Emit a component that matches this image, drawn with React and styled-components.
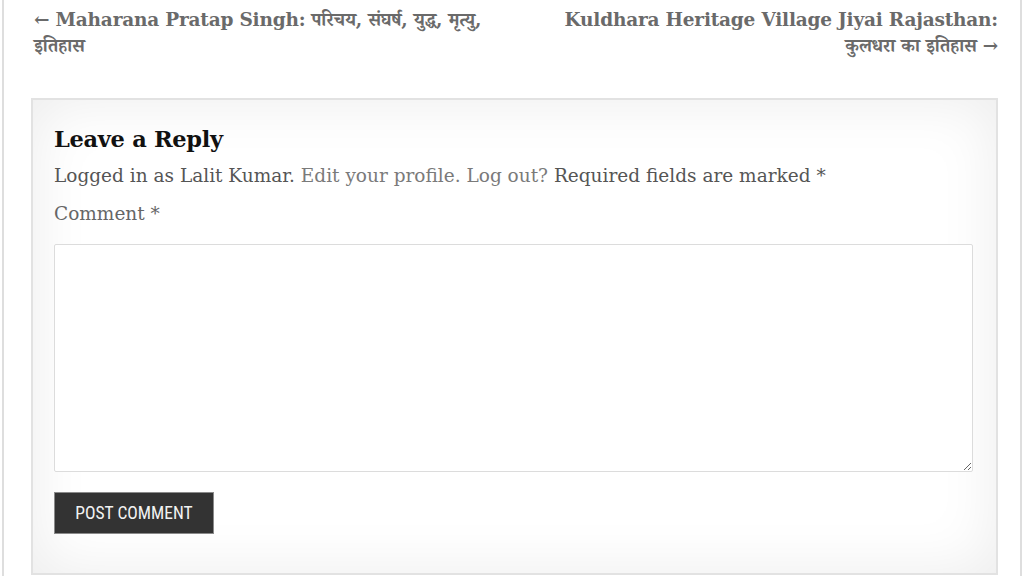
import React from "react";
import styled, { createGlobalStyle } from "styled-components";

const Global = createGlobalStyle`
  html, body { margin: 0; padding: 0; background: #fff; }
  body { font-family: "DejaVu Serif", "Noto Serif Devanagari", "Noto Sans Devanagari", "Lohit Devanagari", "FreeSerif", serif; }
  * { box-sizing: border-box; }
`;

const Page = styled.div`
  width: 1024px;
  height: 576px;
  overflow: hidden;
  padding: 0 2px;
`;

const Frame = styled.div`
  height: 100%;
  border-left: 2px solid #dedede;
  border-right: 2px solid #dedede;
  padding: 0 22px 1px 27px;
  display: flex;
  flex-direction: column;
`;

const PostNav = styled.nav`
  display: flex;
  justify-content: space-between;
  padding: 7px 0 0 3px;
  height: 98px;
`;

const NavLink = styled.a`
  flex: 0 0 480px;
  font-size: 18.5px;
  line-height: 26px;
  font-weight: bold;
  color: #6a6a6a;
  text-decoration: none;
  text-align: ${(p) => (p.$right ? "right" : "left")};
  letter-spacing: -0.2px;
`;

const ReplyBox = styled.section`
  flex: 1;
  border: 2px solid #e2e2e2;
  background: #fff;
  box-shadow: inset 0 0 60px rgba(0, 0, 0, 0.08);
  padding: 24px 22px 0 21px;
  display: flex;
  flex-direction: column;
`;

const Title = styled.h3`
  margin: 0;
  font-size: 22.5px;
  line-height: 30px;
  font-weight: bold;
  color: #111;
  letter-spacing: -0.3px;
`;

const Meta = styled.p`
  margin: 9px 0 0;
  font-size: 18.5px;
  line-height: 26px;
  color: #555;
`;

const MetaLink = styled.a`
  color: #7a7a7a;
  text-decoration: none;
`;

const Label = styled.label`
  display: block;
  margin-top: 12px;
  font-size: 18.5px;
  line-height: 26px;
  color: #666;
`;

const TextArea = styled.textarea`
  display: block;
  margin-top: 17px;
  width: 919px;
  height: 228px;
  border: 1px solid #dcdcdc;
  border-radius: 2px;
  background: #fff;
  resize: vertical;
  outline: none;
`;

const Submit = styled.button`
  margin-top: 20px;
  align-self: flex-start;
  width: 160px;
  height: 42px;
  background: #333;
  color: #f2f2f2;
  border: 1px solid #8a8a8a;
  font-family: "Liberation Sans Narrow", "Roboto Condensed", "Liberation Sans", sans-serif;
  font-size: 17.5px;
  font-weight: 400;
  text-transform: uppercase;
  cursor: pointer;
`;

export default function App() {
  return (
    <Page>
      <Global />
      <Frame>
        <PostNav>
          <NavLink href="#">← Maharana Pratap Singh: परिचय, संघर्ष, युद्ध, मृत्यु, इतिहास</NavLink>
          <NavLink href="#" $right>Kuldhara Heritage Village Jiyai Rajasthan: कुलधरा का इतिहास →</NavLink>
        </PostNav>
        <ReplyBox>
          <Title>Leave a Reply</Title>
          <Meta>
            Logged in as Lalit Kumar. <MetaLink href="#">Edit your profile.</MetaLink>{" "}
            <MetaLink href="#">Log out?</MetaLink> Required fields are marked *
          </Meta>
          <Label htmlFor="comment">Comment *</Label>
          <TextArea id="comment" />
          <Submit type="button">Post Comment</Submit>
        </ReplyBox>
      </Frame>
    </Page>
  );
}
